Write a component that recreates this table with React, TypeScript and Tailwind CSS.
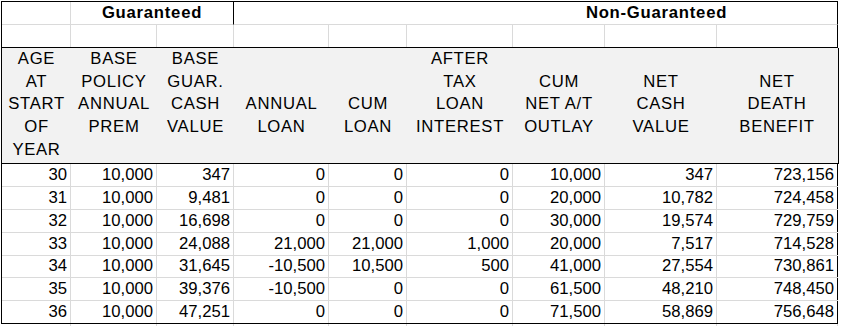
import React from "react";

const widths = [69, 86, 77, 95, 78, 106, 92, 112, 121];

const headers: string[][] = [
  ["AGE", "AT", "START", "OF", "YEAR"],
  ["BASE", "POLICY", "ANNUAL", "PREM", ""],
  ["BASE", "GUAR.", "CASH", "VALUE", ""],
  ["", "", "ANNUAL", "LOAN", ""],
  ["", "", "CUM", "LOAN", ""],
  ["AFTER", "TAX", "LOAN", "INTEREST", ""],
  ["", "CUM", "NET A/T", "OUTLAY", ""],
  ["", "NET", "CASH", "VALUE", ""],
  ["", "NET", "DEATH", "BENEFIT", ""],
];

const data: string[][] = [
  ["30", "10,000", "347", "0", "0", "0", "10,000", "347", "723,156"],
  ["31", "10,000", "9,481", "0", "0", "0", "20,000", "10,782", "724,458"],
  ["32", "10,000", "16,698", "0", "0", "0", "30,000", "19,574", "729,759"],
  ["33", "10,000", "24,088", "21,000", "21,000", "1,000", "20,000", "7,517", "714,528"],
  ["34", "10,000", "31,645", "-10,500", "10,500", "500", "41,000", "27,554", "730,861"],
  ["35", "10,000", "39,376", "-10,500", "0", "0", "61,500", "48,210", "748,450"],
  ["36", "10,000", "47,251", "0", "0", "0", "71,500", "58,869", "756,648"],
];

const rowHeights = [23, 23, 23, 23, 22, 23, 23];

export default function App() {
  return (
    <div
      className="w-[841px] h-[326px] bg-white text-black overflow-hidden"
      style={{ fontFamily: '"Liberation Sans", Arial, sans-serif' }}
    >
      <div className="ml-[1px] mt-[1px] w-[837px] border-l border-t border-black text-[16.7px]">
        {/* Row 1: group titles */}
        <div className="flex h-[23px]">
          <div className="w-[69px] shrink-0 border-r border-b border-[#dadada]" />
          <div className="w-[163px] shrink-0 border-b border-b-[#dadada] border-r border-r-black flex items-center justify-center font-bold leading-[22px] tracking-[0.75px]">
            Guaranteed
          </div>
          <div className="w-[604px] shrink-0 border-b border-b-[#dadada] border-r border-r-black flex items-center justify-center pl-[242px] font-bold leading-[22px] tracking-[0.75px]">
            Non-Guaranteed
          </div>
        </div>
        {/* Row 2: empty */}
        <div className="flex h-[23px] border-b border-black">
          {widths.map((w, i) => (
            <div
              key={i}
              className={
                i === widths.length - 1
                  ? "shrink-0 border-r border-black"
                  : "shrink-0 border-r border-[#dadada]"
              }
              style={{ width: w }}
            />
          ))}
        </div>
        {/* Header row */}
        <div className="flex h-[116px] border-b border-black bg-[#f2f2f2] border-r border-r-black w-[837px] tracking-[0.7px]">
          {headers.map((lines, i) => (
            <div
              key={i}
              className="shrink-0 flex flex-col items-center"
              style={{ width: i === widths.length - 1 ? 120 : widths[i] }}
            >
              {lines.map((l, j) => (
                <div key={j} className="h-[22.7px] leading-[22.7px] whitespace-nowrap">
                  {l}
                </div>
              ))}
            </div>
          ))}
        </div>
        {/* Data rows */}
        {data.map((row, r) => (
          <div
            key={r}
            className={
              r === data.length - 1
                ? "flex border-b border-black"
                : "flex border-b border-[#dadada]"
            }
            style={{ height: rowHeights[r] }}
          >
            {row.map((v, i) => (
              <div
                key={i}
                className={
                  i === widths.length - 1
                    ? "shrink-0 border-r border-black flex items-end justify-end pr-[3px] pb-[1px] leading-[21px]"
                    : "shrink-0 border-r border-[#dadada] flex items-end justify-end pr-[3px] pb-[1px] leading-[21px]"
                }
                style={{ width: widths[i] }}
              >
                {v}
              </div>
            ))}
          </div>
        ))}
      </div>
      {/* continuing gridlines below the table */}
      <div className="flex ml-[2px] h-[3px]">
        {widths.map((w, i) => (
          <div
            key={i}
            className="shrink-0 border-r border-[#dadada]"
            style={{ width: w }}
          />
        ))}
      </div>
    </div>
  );
}
